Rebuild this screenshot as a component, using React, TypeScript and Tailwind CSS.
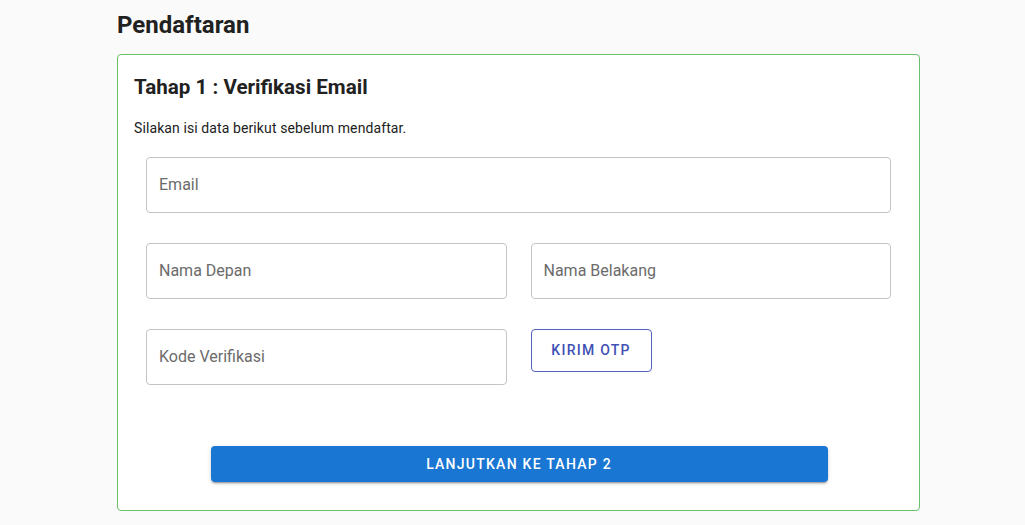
import React from "react";

function Field({ label }: { label: string }) {
  return (
    <div className="h-[56px] flex items-center px-[12px] border border-[#c4c4c4] rounded-[4px] bg-white text-[16px] text-[#6b6b6b]">
      {label}
    </div>
  );
}

export default function App() {
  return (
    <div
      className="min-h-[525px] bg-[#fafafa] text-[#212121]"
      style={{ fontFamily: "Roboto, 'Noto Sans', sans-serif" }}
    >
      <div className="ml-[117px] w-[803px] pt-[9px]">
        <h1 className="text-[24px] leading-[32px] font-bold mb-[13px]">Pendaftaran</h1>

        <div className="border border-[#6abf69] rounded-[4px] bg-white px-[16px] pt-[16px] pb-[28px]">
          <h2 className="text-[20.6px] leading-[32px] font-bold">Tahap 1 : Verifikasi Email</h2>
          <p className="mt-[15px] text-[14px] leading-[20px] tracking-[0.1px]">
            Silakan isi data berikut sebelum mendaftar.
          </p>

          <div className="mx-[12px] mt-[19px] flex flex-col gap-[30px]">
            <Field label="Email" />
            <div className="grid grid-cols-2 gap-x-[24px]">
              <Field label="Nama Depan" />
              <Field label="Nama Belakang" />
            </div>
            <div className="grid grid-cols-2 gap-x-[24px] items-start">
              <Field label="Kode Verifikasi" />
              <div>
                <button className="h-[43px] w-[121px] border border-[#5461c0] rounded-[4px] text-[#3f51b5] text-[14px] font-medium tracking-[1.25px] uppercase">
                  Kirim OTP
                </button>
              </div>
            </div>
          </div>

          <div className="mt-[61px] flex justify-center">
            <button className="h-[36px] w-[617px] ml-[1px] rounded-[4px] bg-[#1976d2] text-white text-[14px] font-medium tracking-[1.25px] uppercase shadow-[0_3px_1px_-2px_rgba(0,0,0,0.2),0_2px_2px_0_rgba(0,0,0,0.14),0_1px_5px_0_rgba(0,0,0,0.12)]">
              Lanjutkan ke Tahap 2
            </button>
          </div>
        </div>
      </div>
    </div>
  );
}
